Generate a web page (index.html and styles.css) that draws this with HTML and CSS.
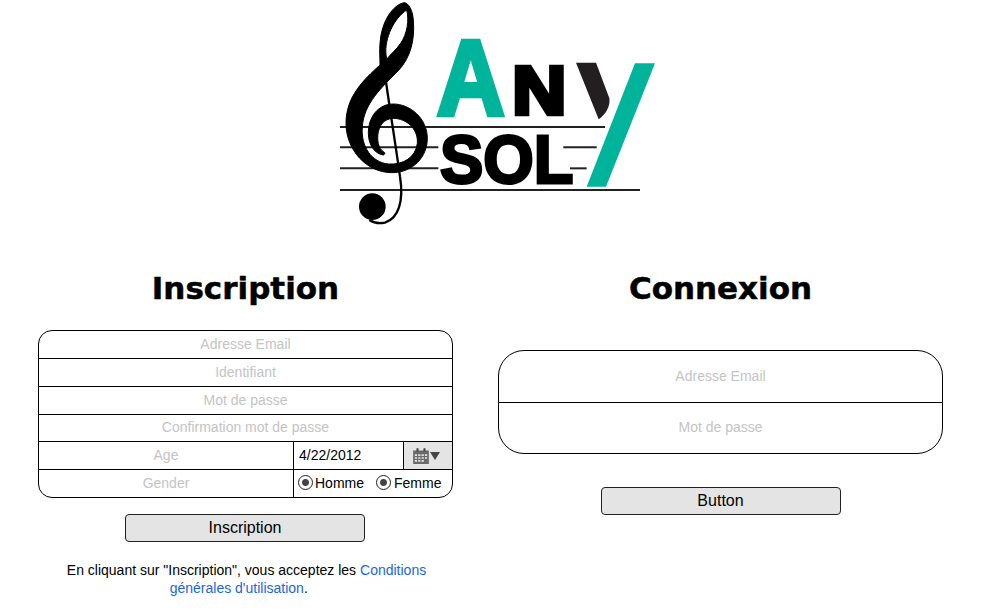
FILE: index.html
```html
<!DOCTYPE html>
<html lang="fr">
<head>
  <meta charset="UTF-8">
  <meta name="viewport" content="width=device-width, initial-scale=1.0">
  <title>AnySol</title>
  <link rel="stylesheet" href="styles.css">
</head>
<body>
  <header class="logo-bar">
    <svg class="logo" viewBox="0 0 1005 690" role="img" aria-label="AnySol">
      <!-- staff -->
      <g class="staff">
        <line x1="30" y1="381" x2="825" y2="381"/>
        <line x1="30" y1="442" x2="325" y2="442"/>
        <line x1="700" y1="442" x2="800" y2="442"/>
        <line x1="30" y1="505" x2="325" y2="505"/>
        <line x1="720" y1="505" x2="770" y2="505"/>
        <line x1="30" y1="570" x2="930" y2="570"/>
      </g>
      <!-- clef -->
      <path class="clef clef-body" fill-rule="evenodd" d="M150 195 C100 240 48 290 48 370 C48 450 110 518 185 518 C250 518 292 470 292 415 C292 355 240 312 190 312 C145 312 115 350 115 400 C115 435 135 462 160 465 C166 462 166 458 160 455 C145 445 140 420 145 395 C153 365 170 355 195 355 C240 360 265 395 262 430 C257 472 220 495 175 492 C125 487 92 440 97 380 C102 310 155 262 205 212 C242 172 255 120 250 60 C248 30 235 8 222 8 C190 15 155 60 150 130 C148 150 150 175 150 195 Z M168 165 C163 115 192 55 230 30 C238 60 232 100 212 130 C198 150 182 162 170 178 Z"/>
      <path class="clef-stem" d="M160 185 C170 270 195 420 210 530 C222 605 205 655 165 668 C145 672 130 668 118 660"/>
      <circle class="clef" cx="127" cy="620" r="40"/>
      <!-- letters -->
      <text class="mark mark-teal" x="320" y="346" font-size="322" textLength="204" lengthAdjust="spacingAndGlyphs">A</text>
      <text class="mark mark-n" x="547" y="343" font-size="206" textLength="162" lengthAdjust="spacingAndGlyphs">N</text>
      <text class="mark mark-sol" x="330" y="550" font-size="205" textLength="400" lengthAdjust="spacingAndGlyphs">SOL</text>
      <polygon class="teal" points="915,190 975,190 828,560 770,560"/>
      <path class="wedge" d="M738 188 L798 188 L838 295 C842 320 825 345 806 358 Z"/>
    </svg>
  </header>

  <main class="panels">
    <section class="panel panel-signup">
      <h2>Inscription</h2>
      <form class="sheet">
        <input class="field" type="text" placeholder="Adresse Email">
        <input class="field" type="text" placeholder="Identifiant">
        <input class="field" type="password" placeholder="Mot de passe">
        <input class="field" type="password" placeholder="Confirmation mot de passe">
        <div class="split">
          <input class="field" type="text" placeholder="Age">
          <div class="date">
            <span class="date-value">4/22/2012</span>
            <span class="date-btn">
              <svg class="cal" viewBox="0 0 16 16">
                <path d="M1 3h14v12H1z" fill="#6a6a6a"/>
                <path d="M4 1h1.800v3H4zM10.200 1H12v3h-1.800z" fill="#444"/>
                <path d="M2.500 6.500h2v1.500h-2zM5.500 6.500h2v1.500h-2zM8.500 6.500h2v1.500h-2zM11.500 6.500h2v1.500h-2zM2.500 9h2v1.500h-2zM5.500 9h2v1.500h-2zM8.500 9h2v1.500h-2zM11.500 9h2v1.500h-2zM2.500 11.500h2V13h-2zM5.500 11.500h2V13h-2zM8.500 11.500h2V13h-2z" fill="#e4e4e4"/>
              </svg>
              <span class="caret"></span>
            </span>
          </div>
        </div>
        <div class="split">
          <input class="field" type="text" placeholder="Gender">
          <div class="genders">
            <label class="gender"><input class="radio" type="radio" name="gender" checked>Homme</label>
            <label class="gender"><input class="radio" type="radio" name="gender2" checked>Femme</label>
          </div>
        </div>
      </form>
      <button class="btn" type="button">Inscription</button>
      <p class="terms">En cliquant sur "Inscription", vous acceptez les <a href="#">Conditions générales d'utilisation</a>.&nbsp;&nbsp;&nbsp;&nbsp;</p>
    </section>

    <section class="panel panel-login">
      <h2>Connexion</h2>
      <form class="sheet sheet-large">
        <input class="field" type="text" placeholder="Adresse Email">
        <input class="field" type="password" placeholder="Mot de passe">
      </form>
      <button class="btn" type="button">Button</button>
    </section>
  </main>
</body>
</html>
```

FILE: styles.css
```css
* {
  margin: 0;
  padding: 0;
  box-sizing: border-box;
}

body {
  font-family: "Liberation Sans", Arial, sans-serif;
  font-size: 14px;
  color: #000;
  background: #fff;
}

/* Logo */
.logo-bar {
  display: flex;
  justify-content: center;
}

.logo {
  display: block;
  width: 335px;
  height: 230px;
}

.staff line {
  stroke: #222;
  stroke-width: 6;
}

.clef {
  fill: #000;
}

.clef-body {
  stroke: #000;
  stroke-width: 3;
}

.clef-stem {
  fill: none;
  stroke: #000;
  stroke-width: 7;
}

.mark {
  font-family: "Liberation Sans", Arial, sans-serif;
  font-weight: 700;
  fill: #000;
  stroke: #000;
  stroke-width: 10;
}

.mark-n {
  stroke-width: 14;
}

.mark-sol {
  stroke-width: 9;
}

.mark-teal {
  fill: #00b49c;
  stroke: #00b49c;
  stroke-width: 14;
}

.teal {
  fill: #00b49c;
}

.wedge {
  fill: #231f20;
}

/* Panels */
.panels {
  display: flex;
  align-items: flex-start;
  gap: 45px;
  padding: 40px 0 0 38px;
}

.panel {
  display: flex;
  flex-direction: column;
  align-items: center;
}

.panel-signup {
  width: 415px;
}

.panel-login {
  width: 445px;
}

.panel h2 {
  font-family: "DejaVu Sans", sans-serif;
  font-size: 31px;
  font-weight: 700;
  line-height: 36px;
  text-align: center;
  -webkit-text-stroke: 0.5px #000;
}

/* Form sheets */
.sheet {
  display: grid;
  grid-template-rows: 28px 28px 28px 27px 28px 1fr;
  width: 100%;
  height: 168px;
  margin-top: 24px;
  border: 1px solid #000;
  border-radius: 14px;
  overflow: hidden;
}

.sheet-large {
  grid-template-rows: 52px 1fr;
  height: 104px;
  margin-top: 44px;
  border-radius: 26px;
}

.field {
  width: 100%;
  min-width: 0;
  padding-bottom: 2px;
  border: none;
  outline: none;
  font: inherit;
  text-align: center;
  background: transparent;
}

.field::placeholder {
  color: #c4c4c4;
  opacity: 1;
}

.sheet > * {
  border-bottom: 1px solid #000;
}

.sheet > *:last-child {
  border-bottom: none;
}

.split {
  display: grid;
  grid-template-columns: 254px 1fr;
}

.date,
.genders {
  display: flex;
  align-items: center;
  border-left: 1px solid #000;
}

.date-value {
  flex: 1;
  padding: 0 0 2px 5px;
}

.date-btn {
  display: flex;
  align-items: center;
  gap: 1px;
  width: 49px;
  height: 100%;
  padding-left: 9px;
  background: #e4e4e4;
  border-left: 1px solid #000;
}

.cal {
  width: 18px;
  height: 18px;
  margin: 0 -1px;
}

.caret {
  width: 0;
  height: 0;
  border-left: 5.500px solid transparent;
  border-right: 5.500px solid transparent;
  border-top: 8px solid #444;
}

.genders {
  gap: 12px;
  padding: 0 0 2px 4px;
}

.gender {
  display: flex;
  align-items: center;
  gap: 2px;
}

.gender + .gender {
  gap: 3px;
}

.radio {
  appearance: none;
  width: 15px;
  height: 15px;
  border: 1px solid #222;
  border-radius: 50%;
  background: radial-gradient(circle, #444 0, #444 3px, #fff 4px);
}

/* Buttons */
.btn {
  width: 240px;
  height: 28px;
  font-family: inherit;
  font-size: 16px;
  color: #000;
  background: #e4e4e4;
  border: 1px solid #222;
  border-radius: 4px;
}

.panel-signup .btn {
  align-self: flex-start;
  margin: 16px 0 0 87px;
}

.panel-login .btn {
  margin-top: 33px;
}

.terms {
  margin-top: 19px;
  padding: 0 19px 0 21px;
  line-height: 18px;
  text-align: center;
}

.terms a {
  color: #1a66e0;
  text-decoration: none;
}
```
